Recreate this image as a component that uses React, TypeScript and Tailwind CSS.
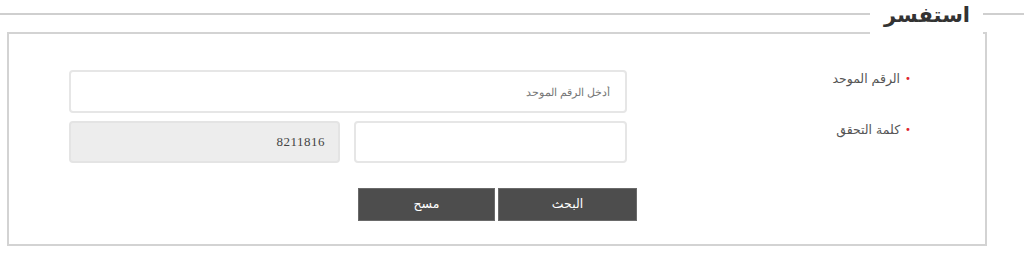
import React from "react";

export default function App() {
  const [unified, setUnified] = React.useState("");
  const [code, setCode] = React.useState("");

  return (
    <div dir="rtl" className="w-[1024px] h-[267px] bg-white font-['DejaVu_Sans',sans-serif] text-[#555]">
      {/* heading line + title */}
      <div className="flex items-start h-[32px]">
        <div className="w-[41px] h-[2px] bg-[#cfcfcf] mt-[13px]" />
        <div className="relative z-10 h-[35px] w-[113px] bg-white pr-[13px] text-[21px] leading-[30px] font-bold text-[#333]">
          استفسر
        </div>
        <div className="flex-1 h-[2px] bg-[#cfcfcf] mt-[13px]" />
      </div>

      <div className="mr-[37px] ml-[7px] h-[214px] border-2 border-[#d3d3d3] pt-[36px]">
        {/* unified number */}
        <div className="flex items-start">
          <div className="w-[358px] pr-[74px] flex items-start gap-[5px] text-[12.5px]">
            <span className="text-[#e0202f] text-[10px] leading-[18px]">•</span>
            <span className="leading-[18px]">الرقم الموحد</span>
          </div>
          <input
            value={unified}
            onChange={(e) => setUnified(e.target.value)}
            placeholder="أدخل الرقم الموحد"
            className="w-[558px] h-[43px] border-2 border-[#e6e6e6] rounded-[4px] px-[15px] text-[11px] font-['Liberation_Sans',sans-serif] placeholder:text-[#777] outline-none"
          />
        </div>

        {/* captcha */}
        <div className="flex items-start mt-[8px]">
          <div className="w-[358px] pr-[74px] flex items-start gap-[5px] text-[12.5px]">
            <span className="text-[#e0202f] text-[10px] leading-[18px]">•</span>
            <span className="leading-[18px]">كلمة التحقق</span>
          </div>
          <input
            value={code}
            onChange={(e) => setCode(e.target.value)}
            className="w-[273px] h-[42px] border-2 border-[#e6e6e6] rounded-[4px] px-[15px] text-[12px] outline-none"
          />
          <div className="mr-[14px] w-[271px] h-[42px] bg-[#ededed] border-2 border-[#e4e4e4] rounded-[4px] flex items-center pr-[13px] font-['Liberation_Serif',serif] text-[13px] text-[#444] tracking-[0.5px]">
            8211816
          </div>
        </div>

        {/* actions */}
        <div className="flex gap-[3px] mt-[25px] pr-[348px]">
          <button className="w-[139px] h-[33px] bg-[#4d4d4d] text-white text-[12.5px] border border-[#6a6a6a]">
            البحث
          </button>
          <button
            onClick={() => {
              setUnified("");
              setCode("");
            }}
            className="w-[137px] h-[33px] bg-[#4d4d4d] text-white text-[12.5px] border border-[#6a6a6a]"
          >
            مسح
          </button>
        </div>
      </div>
    </div>
  );
}
